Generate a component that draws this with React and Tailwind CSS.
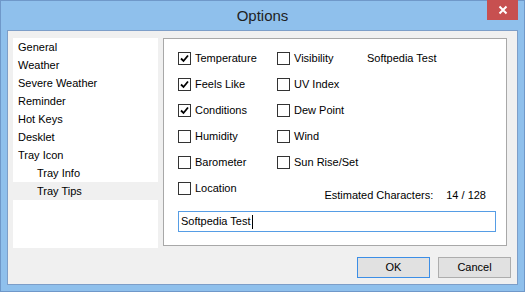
import React, { useState } from "react";

const navItems = [
  { label: "General", indent: false },
  { label: "Weather", indent: false },
  { label: "Severe Weather", indent: false },
  { label: "Reminder", indent: false },
  { label: "Hot Keys", indent: false },
  { label: "Desklet", indent: false },
  { label: "Tray Icon", indent: false },
  { label: "Tray Info", indent: true },
  { label: "Tray Tips", indent: true },
];

const leftColumn = [
  { label: "Temperature", checked: true },
  { label: "Feels Like", checked: true },
  { label: "Conditions", checked: true },
  { label: "Humidity", checked: false },
  { label: "Barometer", checked: false },
  { label: "Location", checked: false },
];

const rightColumn = [
  { label: "Visibility", checked: false },
  { label: "UV Index", checked: false },
  { label: "Dew Point", checked: false },
  { label: "Wind", checked: false },
  { label: "Sun Rise/Set", checked: false },
];

const CheckBox = ({ label, checked }) => (
  <div className="flex items-center h-[13px] gap-[4px]">
    <div className="w-[13px] h-[13px] border border-[#333333] bg-white flex items-center justify-center shrink-0">
      {checked && (
        <svg width="9" height="9" viewBox="0 0 9 9">
          <path d="M1 4.5 L3.5 7 L8 1.5" fill="none" stroke="#000" strokeWidth="1.8" />
        </svg>
      )}
    </div>
    <span className="leading-none">{label}</span>
  </div>
);

const App = () => {
  const [selected] = useState("Tray Tips");
  const tip = "Softpedia Test";

  return (
    <div
      className="w-[525px] h-[292px] bg-[#8fc0ec] border border-[#6f98c9] flex flex-col text-[11px] text-black"
      style={{ fontFamily: '"Liberation Sans", Arial, sans-serif' }}
    >
      {/* Title bar */}
      <div className="relative h-[29px] shrink-0 flex items-center justify-center">
        <span className="text-[15px] text-[#1f1f1f] mt-[1px]">Options</span>
        <div className="absolute top-[-1px] right-[6px] w-[31px] h-[20px] bg-[#c75050] flex items-center justify-center">
          <svg width="10" height="10" viewBox="0 0 10 10">
            <path d="M1.5 1.5 L8.5 8.5 M8.5 1.5 L1.5 8.5" stroke="#fff" strokeWidth="2" />
          </svg>
        </div>
      </div>

      {/* Client area */}
      <div className="mx-[6px] h-[255px] border border-[#7d9ec8] bg-[#f0f0f0] flex flex-col pt-[7px] pl-[5px] pr-[6px]">
        <div className="flex gap-[5px]">
          {/* Navigation list */}
          <div className="w-[145px] h-[210px] bg-white">
            {navItems.map((item) => (
              <div
                key={item.label}
                className={`h-[18px] flex items-center ${item.indent ? "pl-[24px]" : "pl-[5px]"} ${
                  selected === item.label ? "bg-[#f0f0f0]" : ""
                }`}
              >
                {item.label}
              </div>
            ))}
          </div>

          {/* Tips panel */}
          <div className="w-[344px] h-[208px] border border-[#a8a8a8] bg-white pl-[14px] pt-[13px] pr-[10px]">
            <div className="flex">
              <div className="w-[99px] flex flex-col gap-[13px]">
                {leftColumn.map((c) => (
                  <CheckBox key={c.label} {...c} />
                ))}
              </div>
              <div className="w-[90px] flex flex-col gap-[13px]">
                {rightColumn.map((c) => (
                  <CheckBox key={c.label} {...c} />
                ))}
              </div>
              <div className="h-[13px] flex items-center">
                <span className="leading-none">Softpedia Test</span>
              </div>
            </div>

            <div className="flex justify-end pr-[10px] mt-[-6px] h-[12px] items-center gap-[13px]">
              <span>Estimated Characters:</span>
              <span>14 / 128</span>
            </div>

            <div className="mt-[10px] w-[318px] h-[21px] border border-[#569de5] flex items-center px-[2px]">
              <span>{tip}</span>
              <span className="w-[1px] h-[14px] bg-black ml-[1px]" />
            </div>
          </div>
        </div>

        {/* Buttons */}
        <div className="flex justify-end gap-[8px] mt-[9px]">
          <button className="w-[73px] h-[21px] border border-[#3c8ee6] bg-[#e1e1e1] text-[11px]">
            OK
          </button>
          <button className="w-[73px] h-[21px] border border-[#adadad] bg-[#e1e1e1] text-[11px]">
            Cancel
          </button>
        </div>
      </div>
    </div>
  );
};

export default App;
